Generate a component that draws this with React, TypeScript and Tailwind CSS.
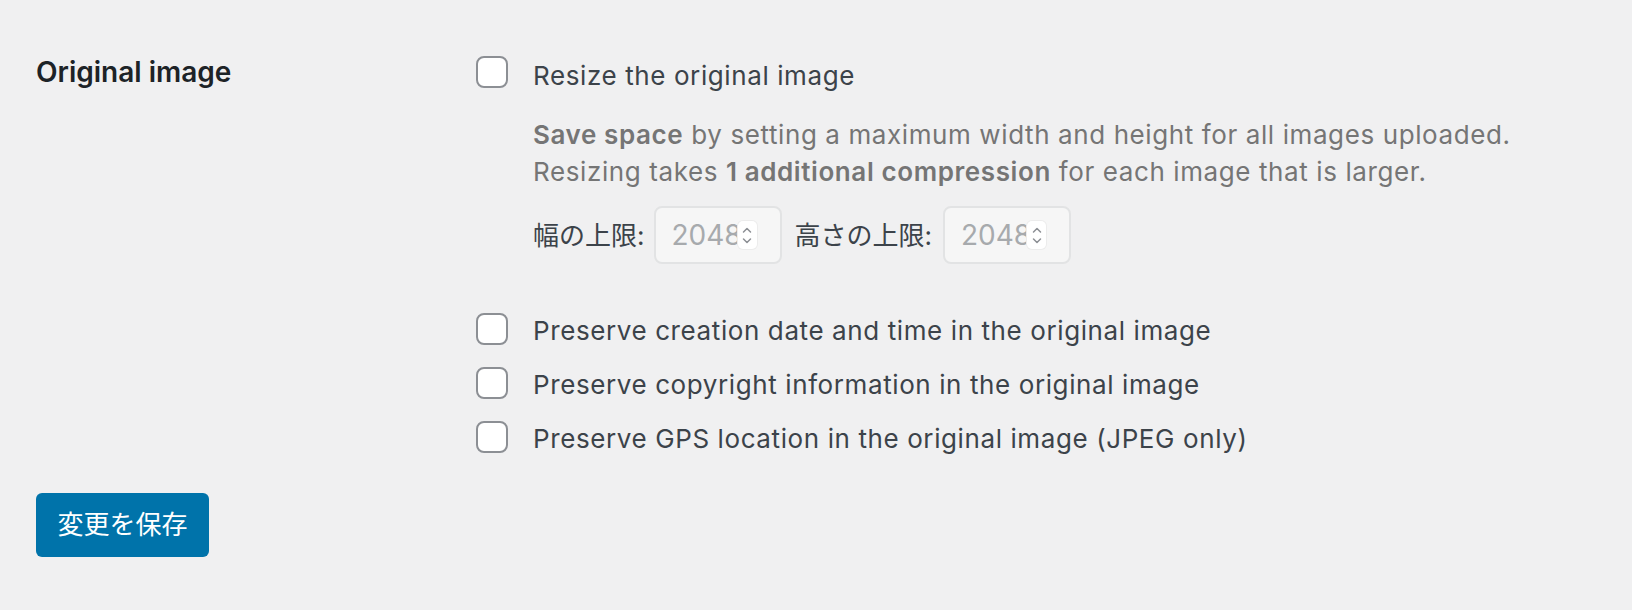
import React from 'react';

const font = { fontFamily: 'Inter, "Noto Sans CJK JP", sans-serif' };

function Checkbox() {
  return (
    <span className="w-[32px] h-[32px] shrink-0 rounded-[8px] border-2 border-[#8c8f94] bg-white" />
  );
}

function Spinner() {
  return (
    <span className="flex flex-col items-center justify-center w-[19px] h-[28px] rounded-[5px] bg-white shadow-[0_0_0_1px_#ececec]">
      <svg width="12" height="8" viewBox="0 0 12 8" fill="none">
        <path d="M2.5 6 L6 2.5 L9.5 6" stroke="#8c8f94" strokeWidth="1.5" strokeLinecap="round" strokeLinejoin="round" />
      </svg>
      <svg width="12" height="8" viewBox="0 0 12 8" fill="none" className="mt-[3px]">
        <path d="M2.5 2 L6 5.5 L9.5 2" stroke="#8c8f94" strokeWidth="1.5" strokeLinecap="round" strokeLinejoin="round" />
      </svg>
    </span>
  );
}

function NumberField() {
  return (
    <div className="flex items-center w-[128px] h-[58px] rounded-[8px] border-2 border-[#e2e3e4] bg-[#f6f6f6] pl-[16px] pr-[21px] overflow-hidden">
      <span className="w-[66px] overflow-hidden whitespace-nowrap text-[28px] text-[#a7aaad]">2048</span>
      <Spinner />
    </div>
  );
}

const options = [
  'Preserve creation date and time in the original image',
  'Preserve copyright information in the original image',
  'Preserve GPS location in the original image (JPEG only)',
];

export default function App() {
  return (
    <div className="min-h-[610px] bg-[#f0f0f1] px-[36px] pt-[56px]" style={font}>
      <div className="flex">
        <div className="w-[440px] shrink-0 text-[28px] font-semibold leading-[1.21] text-[#1d2327]">
          Original image
        </div>

        <div className="flex flex-col">
          <label className="flex items-start gap-[25px]">
            <Checkbox />
            <span className="mt-[2px] text-[26px] leading-[36.4px] tracking-[0.6px] text-[#3c434a]">Resize the original image</span>
          </label>

          <div className="ml-[57px] mt-[23px] text-[26px] leading-[36.4px] tracking-[0.6px] text-[#757575]">
            <p>
              <strong className="font-semibold">Save space</strong> by setting a maximum width and height for all images uploaded.
            </p>
            <p>
              Resizing takes <strong className="font-semibold">1 additional compression</strong> for each image that is larger.
            </p>
          </div>

          <div className="ml-[57px] mt-[16px] flex items-center text-[26px] text-[#3c434a]">
            <span className="mr-[9px]">幅の上限:</span>
            <NumberField />
            <span className="ml-[13px] mr-[11px]">高さの上限:</span>
            <NumberField />
          </div>

          <div className="mt-[49px] flex flex-col gap-[17.6px]">
            {options.map((text) => (
              <label key={text} className="flex items-start gap-[25px]">
                <Checkbox />
                <span className="text-[26px] leading-[36.4px] tracking-[0.6px] text-[#3c434a]">{text}</span>
              </label>
            ))}
          </div>
        </div>
      </div>

      <button className="mt-[35px] flex items-center justify-center w-[173px] h-[64px] rounded-[6px] bg-[#0073aa] text-[26px] text-white">
        変更を保存
      </button>
    </div>
  );
}
